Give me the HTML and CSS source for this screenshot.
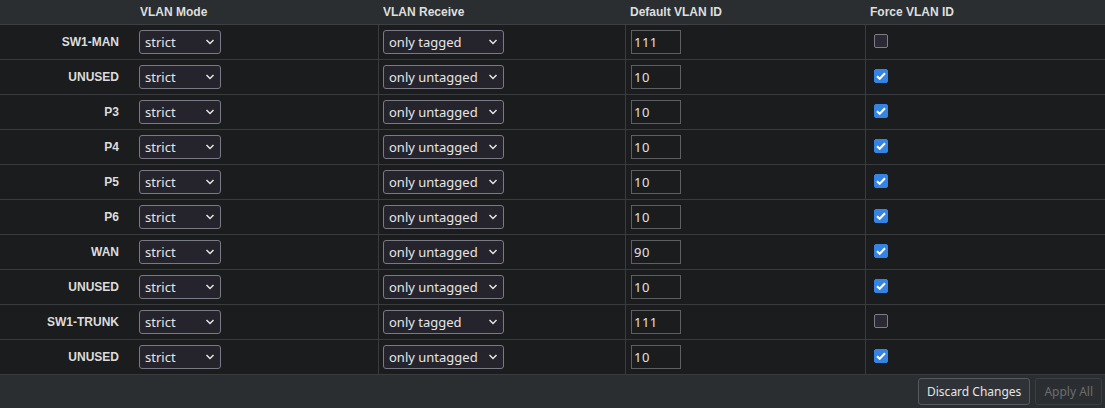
FILE: index.html
```html
<!DOCTYPE html>
<html lang="en">
<head>
    <meta charset="UTF-8">
    <title>VLAN Ports</title>
    <link rel="stylesheet" href="styles.css">
</head>
<body>

<div class="vlan-panel">
    <table class="vlan-table">
        <colgroup>
            <col class="c-name">
            <col class="c-mode">
            <col class="c-recv">
            <col class="c-pvid">
            <col class="c-force">
        </colgroup>
        <thead>
            <tr>
                <th></th>
                <th>VLAN Mode</th>
                <th>VLAN Receive</th>
                <th>Default VLAN ID</th>
                <th>Force VLAN ID</th>
            </tr>
        </thead>
        <tbody id="rows"></tbody>
    </table>

    <div class="actions">
        <button class="btn">Discard Changes</button>
        <button class="btn" disabled>Apply All</button>
    </div>
</div>

<script>
    const ports = [
        ['SW1-MAN', 'only tagged', '111', false],
        ['UNUSED', 'only untagged', '10', true],
        ['P3', 'only untagged', '10', true],
        ['P4', 'only untagged', '10', true],
        ['P5', 'only untagged', '10', true],
        ['P6', 'only untagged', '10', true],
        ['WAN', 'only untagged', '90', true],
        ['UNUSED', 'only untagged', '10', true],
        ['SW1-TRUNK', 'only tagged', '111', false],
        ['UNUSED', 'only untagged', '10', true]
    ];

    const chevron = '<svg class="chev" width="10" height="6" viewBox="0 0 10 6"><path d="M1.5 1l3.5 3.5 3.5-3.5" fill="none" stroke="#e6e6e6" stroke-width="1.5"/></svg>';
    const tick = '<svg width="10" height="8" viewBox="0 0 10 8"><path d="M1 4.2l2.7 2.6L9 1.2" fill="none" stroke="#fff" stroke-width="2"/></svg>';

    const rows = document.getElementById('rows');
    ports.forEach(([name, recv, pvid, force]) => {
        const tr = document.createElement('tr');
        tr.innerHTML = `
            <td class="name">${name}</td>
            <td><span class="select sel-mode"><select><option>strict</option></select>${chevron}</span></td>
            <td><span class="select sel-recv"><select><option>${recv}</option></select>${chevron}</span></td>
            <td><input class="pvid" type="text" value="${pvid}"></td>
            <td><span class="check ${force ? 'on' : ''}">${force ? tick : ''}</span></td>`;
        rows.appendChild(tr);
    });
</script>

</body>
</html>
```

FILE: styles.css
```css
body {
    margin: 0;
    background: #1b1c1e;
    color: #e2e2e2;
    font-family: 'Noto Sans', sans-serif;
    font-size: 13px;
    overflow: hidden;
}

.vlan-panel {
    width: 1105px;
}

.vlan-table {
    width: 1105px;
    table-layout: fixed;
    border-collapse: separate;
    border-spacing: 0;
}

.c-name { width: 135px; }
.c-mode { width: 243px; }
.c-recv { width: 247px; }
.c-pvid { width: 240px; }
.c-force { width: 240px; }

.vlan-table th {
    height: 24px;
    padding: 0 0 0 5px;
    background: #2a2e31;
    border-bottom: 1px solid #3d4043;
    text-align: left;
    font-family: 'Liberation Sans', Arial, sans-serif;
    font-weight: bold;
    font-size: 12px;
    color: #dedede;
    vertical-align: middle;
}

.vlan-table td {
    height: 34px;
    padding: 0 0 0 4px;
    border-bottom: 1px solid #393b3e;
    vertical-align: middle;
}

.vlan-table td:nth-child(n+3) {
    border-left: 1px solid #393b3e;
}

.vlan-table td:nth-child(4) {
    padding-left: 5px;
}

.vlan-table td.name {
    padding: 0 16px 0 0;
    text-align: right;
    font-family: 'Liberation Sans', Arial, sans-serif;
    font-weight: bold;
    font-size: 12px;
    color: #dcdcdc;
}

/* Dropdowns */
.select {
    position: relative;
    display: inline-block;
    vertical-align: middle;
}

.select select {
    appearance: none;
    -webkit-appearance: none;
    height: 24px;
    padding: 0 0 0 5px;
    border: 1px solid #7a7a84;
    border-radius: 3px;
    background: #25232c;
    color: #e6e6e6;
    font-family: 'Noto Sans', sans-serif;
    font-size: 13px;
    outline: none;
}

.sel-mode select { width: 82px; }
.sel-recv select { width: 121px; }

.select .chev {
    position: absolute;
    right: 6px;
    top: 9px;
    pointer-events: none;
}

/* Default VLAN ID */
.pvid {
    box-sizing: border-box;
    width: 50px;
    height: 24px;
    padding: 0 0 0 2px;
    border: 1px solid #5e5f61;
    background: #1b1c1e;
    color: #e2e2e2;
    font-family: 'Noto Sans', sans-serif;
    font-size: 13px;
    letter-spacing: 0.5px;
    outline: none;
    vertical-align: middle;
}

/* Force VLAN ID */
.check {
    box-sizing: border-box;
    display: inline-flex;
    align-items: center;
    justify-content: center;
    width: 14px;
    height: 14px;
    margin: 0 0 0 4px;
    border: 1px solid #7d7d88;
    border-radius: 2px;
    background: #2b2933;
    vertical-align: middle;
    position: relative;
    top: -3px;
}

.check.on {
    border-color: #3584e4;
    background: #3584e4;
}

/* Footer */
.actions {
    height: 33px;
    background: #2a2e31;
    display: flex;
    justify-content: flex-end;
    align-items: center;
    gap: 5px;
    padding: 0 3px 0 0;
}

.btn {
    height: 27px;
    padding: 0 8px;
    border: 1px solid #56595d;
    border-radius: 3px;
    background: #2f3337;
    color: #e4e4e4;
    font-family: 'Noto Sans', sans-serif;
    font-size: 12px;
}

.btn:disabled {
    border-color: #3b3e42;
    background: #2a2e31;
    color: #6b6e71;
}
```
